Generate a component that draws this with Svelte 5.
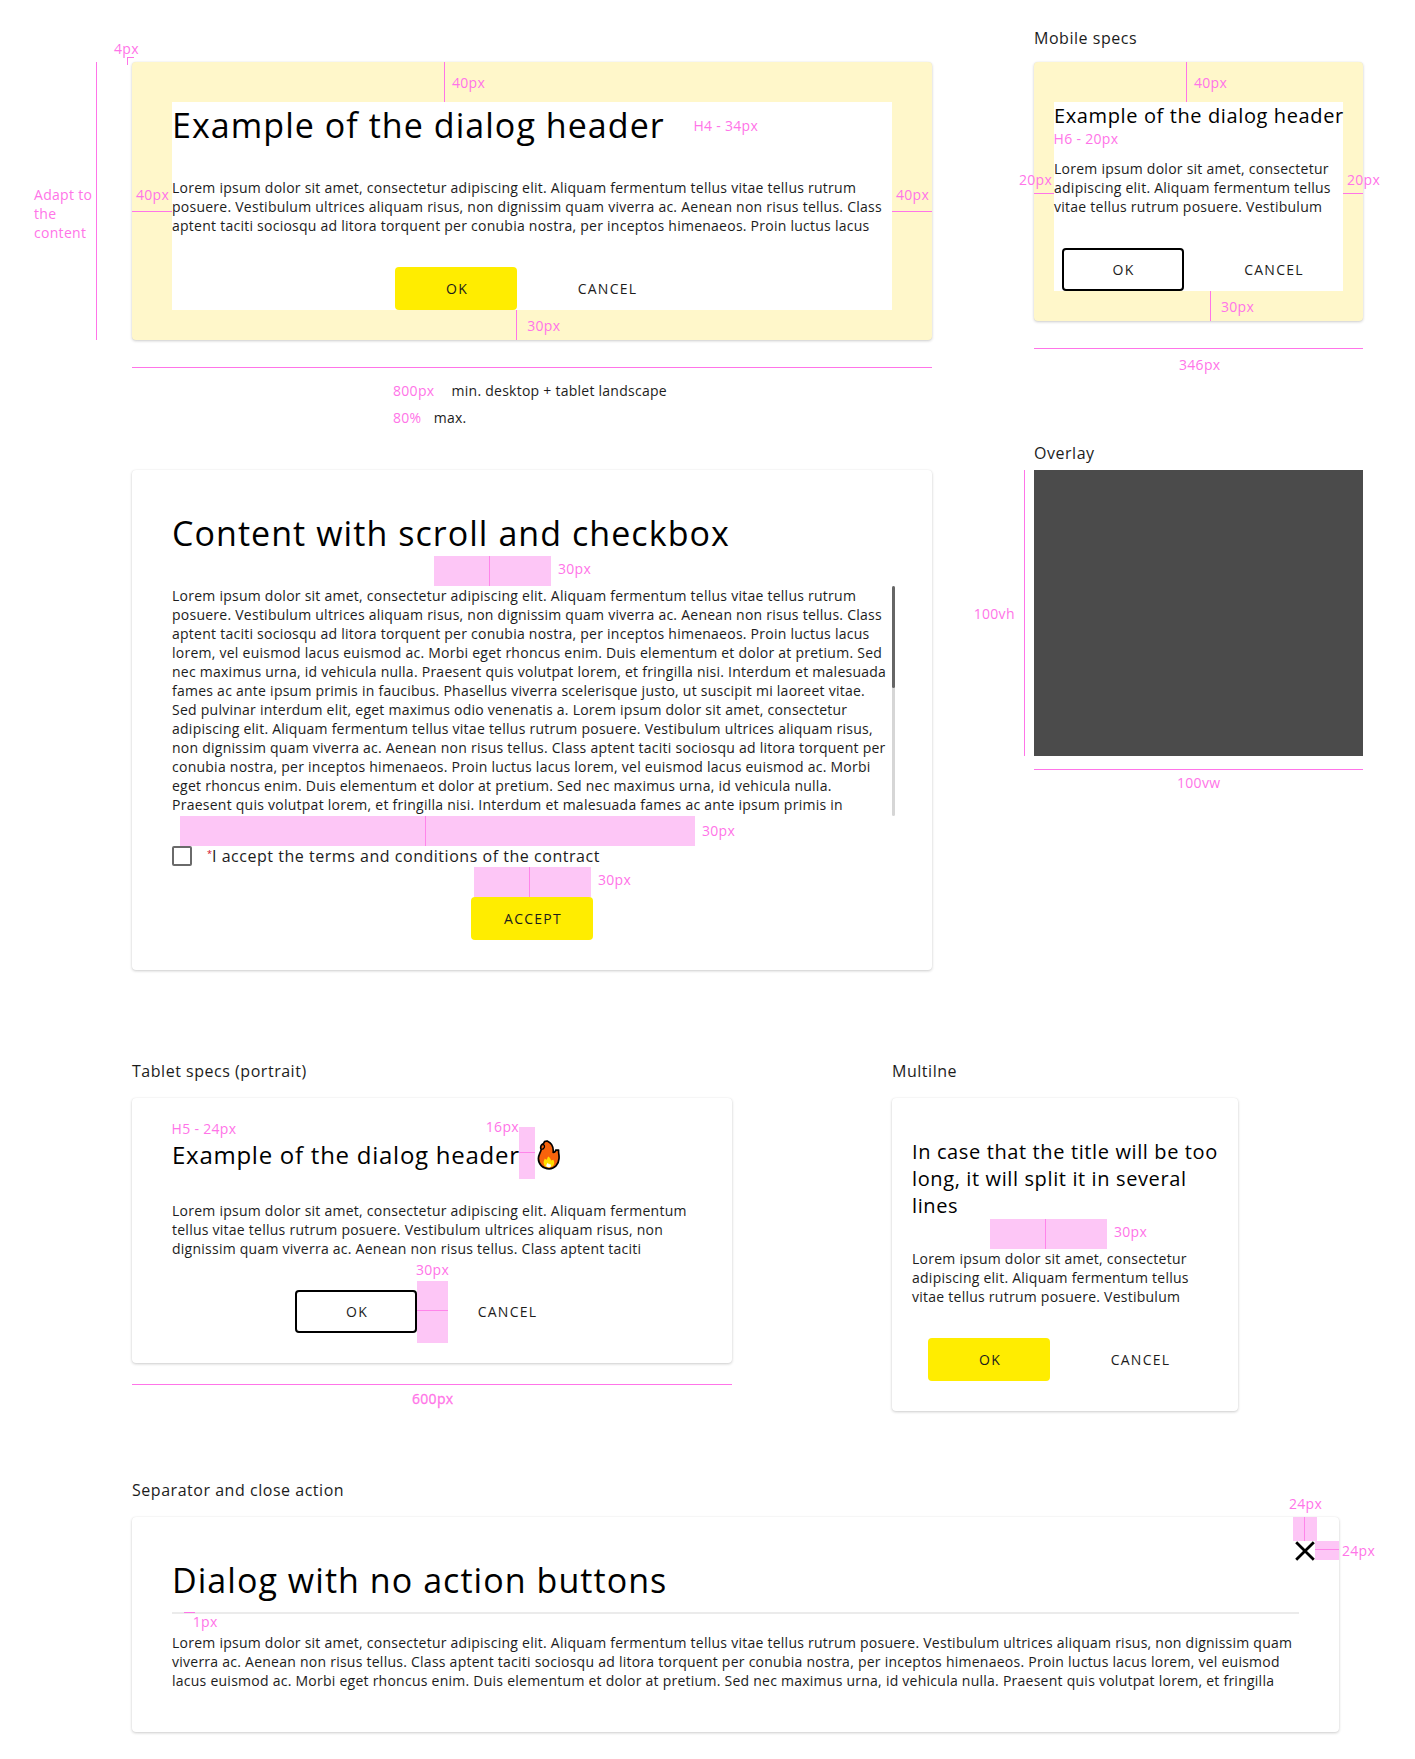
<script>
  const longText = `Lorem ipsum dolor sit amet, consectetur adipiscing elit. Aliquam fermentum tellus vitae tellus rutrum
posuere. Vestibulum ultrices aliquam risus, non dignissim quam viverra ac. Aenean non risus tellus. Class
aptent taciti sociosqu ad litora torquent per conubia nostra, per inceptos himenaeos. Proin luctus lacus
lorem, vel euismod lacus euismod ac. Morbi eget rhoncus enim. Duis elementum et dolor at pretium. Sed
nec maximus urna, id vehicula nulla. Praesent quis volutpat lorem, et fringilla nisi. Interdum et malesuada
fames ac ante ipsum primis in faucibus. Phasellus viverra scelerisque justo, ut suscipit mi laoreet vitae.
Sed pulvinar interdum elit, eget maximus odio venenatis a. Lorem ipsum dolor sit amet, consectetur
adipiscing elit. Aliquam fermentum tellus vitae tellus rutrum posuere. Vestibulum ultrices aliquam risus,
non dignissim quam viverra ac. Aenean non risus tellus. Class aptent taciti sociosqu ad litora torquent per
conubia nostra, per inceptos himenaeos. Proin luctus lacus lorem, vel euismod lacus euismod ac. Morbi
eget rhoncus enim. Duis elementum et dolor at pretium. Sed nec maximus urna, id vehicula nulla.
Praesent quis volutpat lorem, et fringilla nisi. Interdum et malesuada fames ac ante ipsum primis in`;
  const desktopText = longText.split('\n').slice(0, 3).join('\n');
  const mobileText = `Lorem ipsum dolor sit amet, consectetur
adipiscing elit. Aliquam fermentum tellus
vitae tellus rutrum posuere. Vestibulum`;
  const tabletText = `Lorem ipsum dolor sit amet, consectetur adipiscing elit. Aliquam fermentum
tellus vitae tellus rutrum posuere. Vestibulum ultrices aliquam risus, non
dignissim quam viverra ac. Aenean non risus tellus. Class aptent taciti`;
  const wideText = `Lorem ipsum dolor sit amet, consectetur adipiscing elit. Aliquam fermentum tellus vitae tellus rutrum posuere. Vestibulum ultrices aliquam risus, non dignissim quam
viverra ac. Aenean non risus tellus. Class aptent taciti sociosqu ad litora torquent per conubia nostra, per inceptos himenaeos. Proin luctus lacus lorem, vel euismod
lacus euismod ac. Morbi eget rhoncus enim. Duis elementum et dolor at pretium. Sed nec maximus urna, id vehicula nulla. Praesent quis volutpat lorem, et fringilla`;

  // Redline annotations, placed on the sheet's own coordinates: [x, y, width, height]
  const areas = [
    [434, 556, 117, 30], [180, 816, 515, 30], [474, 867, 117, 30],
    [519, 1127, 16, 52], [417, 1281, 31, 62], [990, 1219, 117, 30],
    [1293, 1517, 24, 24], [1315, 1541, 24, 19],
  ];
  const rules = [
    [96, 62, 1, 278], [127, 57, 7, 1], [127, 57, 1, 8], [444, 62, 1, 40], [132, 211, 40, 1], [892, 211, 40, 1],
    [516, 310, 1, 30], [132, 367, 800, 1],
    [1186, 62, 1, 40], [1034, 193, 20, 1], [1343, 193, 20, 1], [1210, 291, 1, 30], [1034, 348, 329, 1],
    [1024, 470, 1, 286], [1034, 769, 329, 1],
    [132, 1384, 600, 1], [184, 1612, 11, 1],
  ];
  const midlines = [
    [489, 556, 1, 30], [425, 816, 1, 30], [529, 867, 1, 30],
    [519, 1152, 16, 1], [417, 1310, 31, 1], [1045, 1219, 1, 30],
    [1304, 1517, 1, 24], [1315, 1549, 24, 1],
  ];
  // [x, baseline, text]
  const notes = [
    [114, 54, '4px'], [34, 200, 'Adapt to\nthe\ncontent'], [136, 200, '40px'], [896, 200, '40px'],
    [452, 88, '40px'], [693.4, 131, 'H4 - 34px'], [527.2, 331, '30px'],
    [1194, 88, '40px'], [1053.6, 144, 'H6 - 20px'], [1019, 185, '20px'], [1347, 185, '20px'],
    [1221, 312, '30px'], [1179, 370, '346px'],
    [973.7, 619, '100vh'], [1177, 788, '100vw'],
    [558, 574, '30px'], [702, 836, '30px'], [598, 885, '30px'],
    [171.6, 1134, 'H5 - 24px'], [485.8, 1132, '16px'], [416, 1275, '30px'], [412, 1404, '600px', true],
    [1114, 1237, '30px'], [1289, 1509, '24px'], [1342, 1556, '24px'], [192.8, 1627, '1px'],
  ];
</script>

{#snippet actions(kind)}
  <div class="actions">
    <button class="btn {kind}">OK</button>
    <button class="btn text">CANCEL</button>
  </div>
{/snippet}

<main class="sheet">
  <div class="top">
    <div class="desktop">
      <section class="card padded">
        <div class="inner">
          <h1>Example of the dialog header</h1>
          <p>{desktopText}</p>
          {@render actions('primary')}
        </div>
      </section>
      <div class="sizes">
        <div><span class="key">800px</span>min. desktop + tablet landscape</div>
        <div><span class="key short">80%</span>max.</div>
      </div>
      <section class="card scroll">
        <h1>Content with scroll and checkbox</h1>
        <div class="scroller">
          <p>{longText}</p>
          <div class="track"><div class="thumb"></div></div>
        </div>
        <div class="check">
          <span class="box"></span>
          <span class="star">*</span><span>I accept the terms and conditions of the contract</span>
        </div>
        <div class="actions single"><button class="btn primary">ACCEPT</button></div>
      </section>
    </div>

    <div class="side">
      <h4>Mobile specs</h4>
      <section class="card padded mobile">
        <div class="inner">
          <h3>Example of the dialog header</h3>
          <p>{mobileText}</p>
          {@render actions('outline')}
        </div>
      </section>
      <h4 class="overlay-title">Overlay</h4>
      <div class="overlay"></div>
    </div>
  </div>

  <div class="middle">
    <div class="tablet">
      <h4>Tablet specs (portrait)</h4>
      <section class="card">
        <div class="titled">
          <h2>Example of the dialog header</h2>
          <svg class="fire" viewBox="0 0 24 30" width="24" height="30">
            <path d="M7.6 1.6C8.6 1.1 9.6 1 10.6 1.2C15.2 3.2 16.6 7.6 16.2 12.4C17.8 12.2 18.6 11.6 18.7 10.2L21.6 10C21.2 13 22.4 14.6 22 18.6C21.6 24.6 17.6 28.8 12.2 28.8C6 28.8 1.4 24.4 1.4 18.6C1.4 15 3.4 13 4.2 9.6C3.4 8.4 3.6 5.4 5 4.6C6.4 4 7 3 7.6 1.6Z" fill="#f7630c" stroke="#000" stroke-width="1.7" stroke-linejoin="round" />
            <path d="M5.2 4.6C7 4.2 7.8 5.6 7.4 7.2C6.8 8.8 5.6 9.4 4.4 9.4" fill="none" stroke="#000" stroke-width="1.3" />
            <path d="M6.6 23C6.4 21 7.4 20 7.8 18.4L9.4 19.8C10.6 18.8 10.4 17.4 11.2 16.6C13 17.4 13.4 19 14.2 20.4L16.4 19.8C17.6 22 17.6 24.4 16 26C14 27.8 9.6 28 7.8 26C7 25 6.6 24 6.6 23Z" fill="#ffde00" />
            <path d="M9.4 26.6C9 25 9.8 24 10.8 22.8L12 24.4L13 23.8C14.2 25 14.2 26.2 13.4 27C12.2 27.6 10.4 27.4 9.4 26.6Z" fill="#fff" />
          </svg>
        </div>
        <p>{tabletText}</p>
        {@render actions('outline')}
      </section>
    </div>
    <div class="multi">
      <h4>Multilne</h4>
      <section class="card">
        <h3>In case that the title will be too<br />long, it will split it in several<br />lines</h3>
        <p>{mobileText}</p>
        {@render actions('primary')}
      </section>
    </div>
  </div>

  <div class="bottom">
    <h4>Separator and close action</h4>
    <section class="card closable">
      <h1>Dialog with no action buttons</h1>
      <hr />
      <p>{wideText}</p>
      <svg class="close" viewBox="0 0 20 20" width="20" height="20">
        <path d="M1.2 1.2L18.8 18.8M18.8 1.2L1.2 18.8" stroke="#000" stroke-width="2.8" fill="none" />
      </svg>
    </section>
  </div>

  <div class="redlines">
    {#each areas as [x, y, w, h]}
      <i class="area" style="left:{x}px;top:{y}px;width:{w}px;height:{h}px"></i>
    {/each}
    {#each midlines as [x, y, w, h]}
      <i class="rule mid" style="left:{x}px;top:{y}px;width:{w}px;height:{h}px"></i>
    {/each}
    {#each rules as [x, y, w, h]}
      <i class="rule" style="left:{x}px;top:{y}px;width:{w}px;height:{h}px"></i>
    {/each}
    {#each notes as [x, y, text, strong]}
      <span class="note" class:strong style="left:{x}px;top:{y - 15}px">{text}</span>
    {/each}
  </div>
</main>

<style>
  :global(body) {
    margin: 0;
    background: #fff;
  }
  .sheet {
    position: relative;
    box-sizing: border-box;
    width: 1415px;
    height: 1759px;
    padding-left: 132px;
    overflow: hidden;
    font-family: 'Open Sans', sans-serif;
    font-weight: 400;
    font-size: 14px;
    line-height: 19px;
    letter-spacing: 0.25px;
    color: #1c1c1c;
  }
  h1, h2, h3, h4, p {
    margin: 0;
    font-weight: 400;
    white-space: pre;
  }
  h1, h2, h3 {
    letter-spacing: 0.031em;
    color: #000;
  }
  h1 { font-size: 34px; line-height: 46px; }
  h2 { font-size: 24px; line-height: 33px; }
  h3 { font-size: 20px; line-height: 27px; }
  h4 { font-size: 16px; line-height: 22px; height: 38px; letter-spacing: 0.53px; }

  .card {
    box-sizing: border-box;
    border-radius: 4px;
    background: #fff;
    box-shadow: 0 1px 3px rgba(0, 0, 0, 0.2), 0 0 1px rgba(0, 0, 0, 0.08);
    padding: 40px 40px 30px;
  }
  .card p { margin-top: 30px; }
  .padded { background: #fff7ca; }
  .inner { background: #fff; }

  .actions {
    display: flex;
    justify-content: center;
    gap: 30px;
    margin-top: 32px;
  }
  .actions.single { margin-top: 30px; }
  .btn {
    flex: none;
    box-sizing: border-box;
    width: 122px;
    height: 43px;
    padding: 0 0 0 2px;
    border: 0;
    border-radius: 4px;
    background: none;
    color: inherit;
    font: inherit;
    letter-spacing: 1.25px;
  }
  .primary { background: #ffed00; }
  .outline { border: 2px solid #000; }
  .btn.text { padding: 0 1px 0 0; }

  .top {
    display: grid;
    grid-template-columns: 800px 329px;
    column-gap: 102px;
  }
  .desktop { padding-top: 62px; }
  .sizes {
    display: flex;
    flex-direction: column;
    gap: 8px;
    height: 89px;
    box-sizing: border-box;
    padding: 0 0 0 261px;
    margin: 41px 0 0;
  }
  .sizes div { white-space: nowrap; }
  .key {
    display: inline-block;
    width: 58.6px;
    letter-spacing: 0.3px;
    color: #ff74e8;
  }
  .key.short { width: 40.8px; }

  .scroller {
    display: flex;
    justify-content: space-between;
    height: 230px;
    margin: 30px -3px 0 0;
  }
  .card .scroller p { margin: 0; }
  .track {
    width: 3px;
    border-radius: 2px;
    background: #d6d6d6;
  }
  .thumb {
    height: 102px;
    border-radius: 2px;
    background: #666;
  }
  .check {
    display: flex;
    align-items: flex-start;
    height: 21px;
    margin-top: 30px;
    font-size: 16px;
    line-height: 21px;
    letter-spacing: 0.53px;
    white-space: nowrap;
  }
  .box {
    box-sizing: border-box;
    width: 20px;
    height: 20px;
    margin: 0.4px 15px 0 0;
    border: 2px solid #6a6a6a;
    border-radius: 2px;
  }
  .star {
    width: 5px;
    font-size: 9px;
    letter-spacing: 0;
    line-height: 16px;
    color: #d0021b;
  }

  .side { padding-top: 27px; }
  .side h4 { height: 35px; }
  .mobile { padding: 40px 20px 30px; }
  .side .overlay-title { height: 28px; margin-top: 121px; }
  .overlay { height: 286px; background: #4b4b4b; }

  .middle {
    display: grid;
    grid-template-columns: 600px 346px;
    column-gap: 160px;
    align-items: start;
    margin-top: 90px;
  }
  .titled {
    display: flex;
    align-items: flex-start;
  }
  .titled h2 { width: 365px; }
  .fire { margin-top: 2px; }
  .multi .card { padding: 40px 20px 30px; }

  .bottom {
    width: 1207px;
    margin-top: 68px;
  }
  .closable {
    position: relative;
    height: 215px;
  }
  hr {
    height: 2px;
    margin: 9px 0 0;
    border: 0;
    background: #ebebeb;
  }
  .card.closable p { margin-top: 19px; }
  .close {
    position: absolute;
    top: 24px;
    right: 24px;
  }

  .redlines {
    position: absolute;
    inset: 0;
    pointer-events: none;
  }
  .area, .rule, .note { position: absolute; }
  .area { background: rgba(252, 160, 240, 0.6); }
  .rule { background: #ff74e8; }
  .rule.mid { background: #ff85ea; }
  .note {
    letter-spacing: 0.3px;
    color: #ff74e8;
    white-space: pre;
  }
  .note.strong { -webkit-text-stroke: 0.3px currentColor; }
</style>
